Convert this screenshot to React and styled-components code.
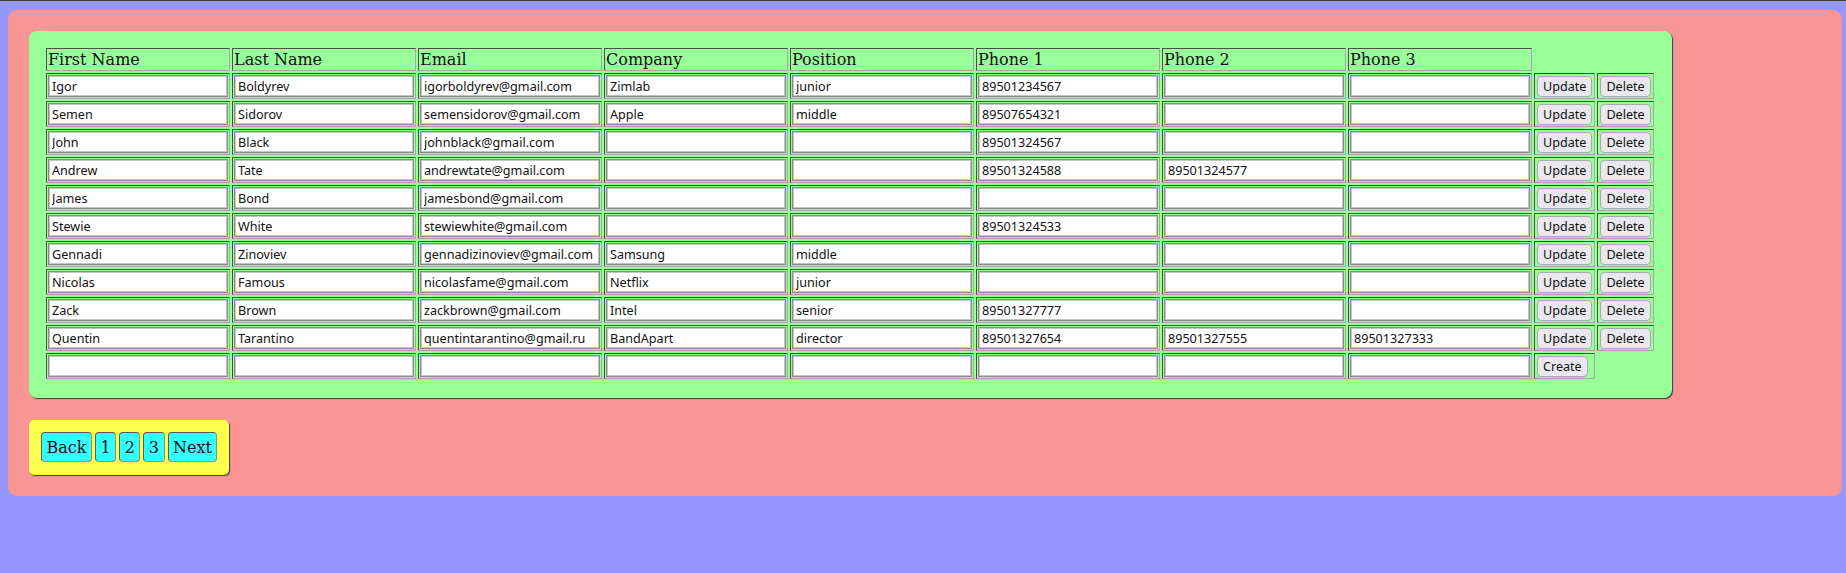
import React from "react";
import styled, { createGlobalStyle } from "styled-components";

const GlobalStyle = createGlobalStyle`
  html {
    background: #9696ff;
  }
  body {
    margin: 0;
    padding: 9px 4px 80px 8px;
    border-top: 1px solid #3a3a3a;
    font-family: "DejaVu Serif", serif;
    font-size: 16px;
  }
`;

const Page = styled.div`
  background: #f99595;
  border-radius: 9px;
  padding: 21px;
  display: flex;
  flex-direction: column;
  align-items: flex-start;
  gap: 22px;
`;

const Card = styled.div`
  background: #99ff99;
  border-radius: 8px;
  padding: 15px 16px 17px 15px;
  box-shadow: 1px 1px 1px #3c3c3c;
`;

const Table = styled.table`
  border-collapse: separate;
  border-spacing: 2px;
`;

const Cell = styled.td`
  border: 1px solid;
  border-color: #4d4d4d #a6a6a6 #a6a6a6 #4d4d4d;
  padding: 1px;
  vertical-align: middle;
`;

const HeadCell = styled(Cell)`
  font-family: "DejaVu Serif", serif;
  font-size: 16px;
  line-height: 19px;
  color: #111;
  text-align: left;
`;

const Field = styled.input`
  display: block;
  box-sizing: border-box;
  width: 180px;
  height: 22px;
  margin: 0;
  padding: 1px 3px;
  border: 1px solid #8c8c8c;
  box-shadow: inset 1px 1px 0 #c4c4c4, inset -1px -1px 0 #c4c4c4;
  background: #fff;
  font-family: "Noto Sans", sans-serif;
  font-size: 12.6px;
  color: #111;
  outline: none;
`;

const RowButton = styled.button`
  display: block;
  height: 21px;
  margin: 0 1px;
  padding: 0 5px;
  border: 1px solid #a8a8b0;
  border-radius: 4px;
  background: #e9e9ed;
  font-family: "Noto Sans", sans-serif;
  font-size: 12.6px;
  color: #111;
  cursor: pointer;
`;

const Pager = styled.div`
  background: #ffff4d;
  border-radius: 5px;
  padding: 12px 12px 13px 12px;
  box-shadow: 1px 1px 1px #3c3c3c;
  display: flex;
  gap: 3px;
`;

const PageButton = styled.button`
  height: 30px;
  padding: 0 4.5px;
  border: 1px solid;
  border-color: #5a5a5a #8c8c8c #8c8c8c #5a5a5a;
  border-radius: 4px;
  background: #33ffff;
  font-family: "DejaVu Serif", serif;
  font-size: 16px;
  color: #111;
  cursor: pointer;
`;

const headers = [
  "First Name",
  "Last Name",
  "Email",
  "Company",
  "Position",
  "Phone 1",
  "Phone 2",
  "Phone 3"
];

const people = [
  ["Igor", "Boldyrev", "igorboldyrev@gmail.com", "Zimlab", "junior", "89501234567", "", ""],
  ["Semen", "Sidorov", "semensidorov@gmail.com", "Apple", "middle", "89507654321", "", ""],
  ["John", "Black", "johnblack@gmail.com", "", "", "89501324567", "", ""],
  ["Andrew", "Tate", "andrewtate@gmail.com", "", "", "89501324588", "89501324577", ""],
  ["James", "Bond", "jamesbond@gmail.com", "", "", "", "", ""],
  ["Stewie", "White", "stewiewhite@gmail.com", "", "", "89501324533", "", ""],
  ["Gennadi", "Zinoviev", "gennadizinoviev@gmail.com", "Samsung", "middle", "", "", ""],
  ["Nicolas", "Famous", "nicolasfame@gmail.com", "Netflix", "junior", "", "", ""],
  ["Zack", "Brown", "zackbrown@gmail.com", "Intel", "senior", "89501327777", "", ""],
  ["Quentin", "Tarantino", "quentintarantino@gmail.ru", "BandApart", "director", "89501327654", "89501327555", "89501327333"]
];

const App = () => {
  return (
    <>
      <GlobalStyle />
      <Page>
        <Card>
          <Table>
            <tbody>
              <tr>
                {headers.map(h => (
                  <HeadCell key={h}>{h}</HeadCell>
                ))}
              </tr>
              {people.map((row, i) => (
                <tr key={i}>
                  {row.map((val, j) => (
                    <Cell key={j}>
                      <Field type="text" defaultValue={val} />
                    </Cell>
                  ))}
                  <Cell>
                    <RowButton>Update</RowButton>
                  </Cell>
                  <Cell>
                    <RowButton>Delete</RowButton>
                  </Cell>
                </tr>
              ))}
              <tr>
                {headers.map(h => (
                  <Cell key={h}>
                    <Field type="text" />
                  </Cell>
                ))}
                <Cell>
                  <RowButton>Create</RowButton>
                </Cell>
              </tr>
            </tbody>
          </Table>
        </Card>
        <Pager>
          <PageButton>Back</PageButton>
          <PageButton>1</PageButton>
          <PageButton>2</PageButton>
          <PageButton>3</PageButton>
          <PageButton>Next</PageButton>
        </Pager>
      </Page>
    </>
  );
};

export default App;
